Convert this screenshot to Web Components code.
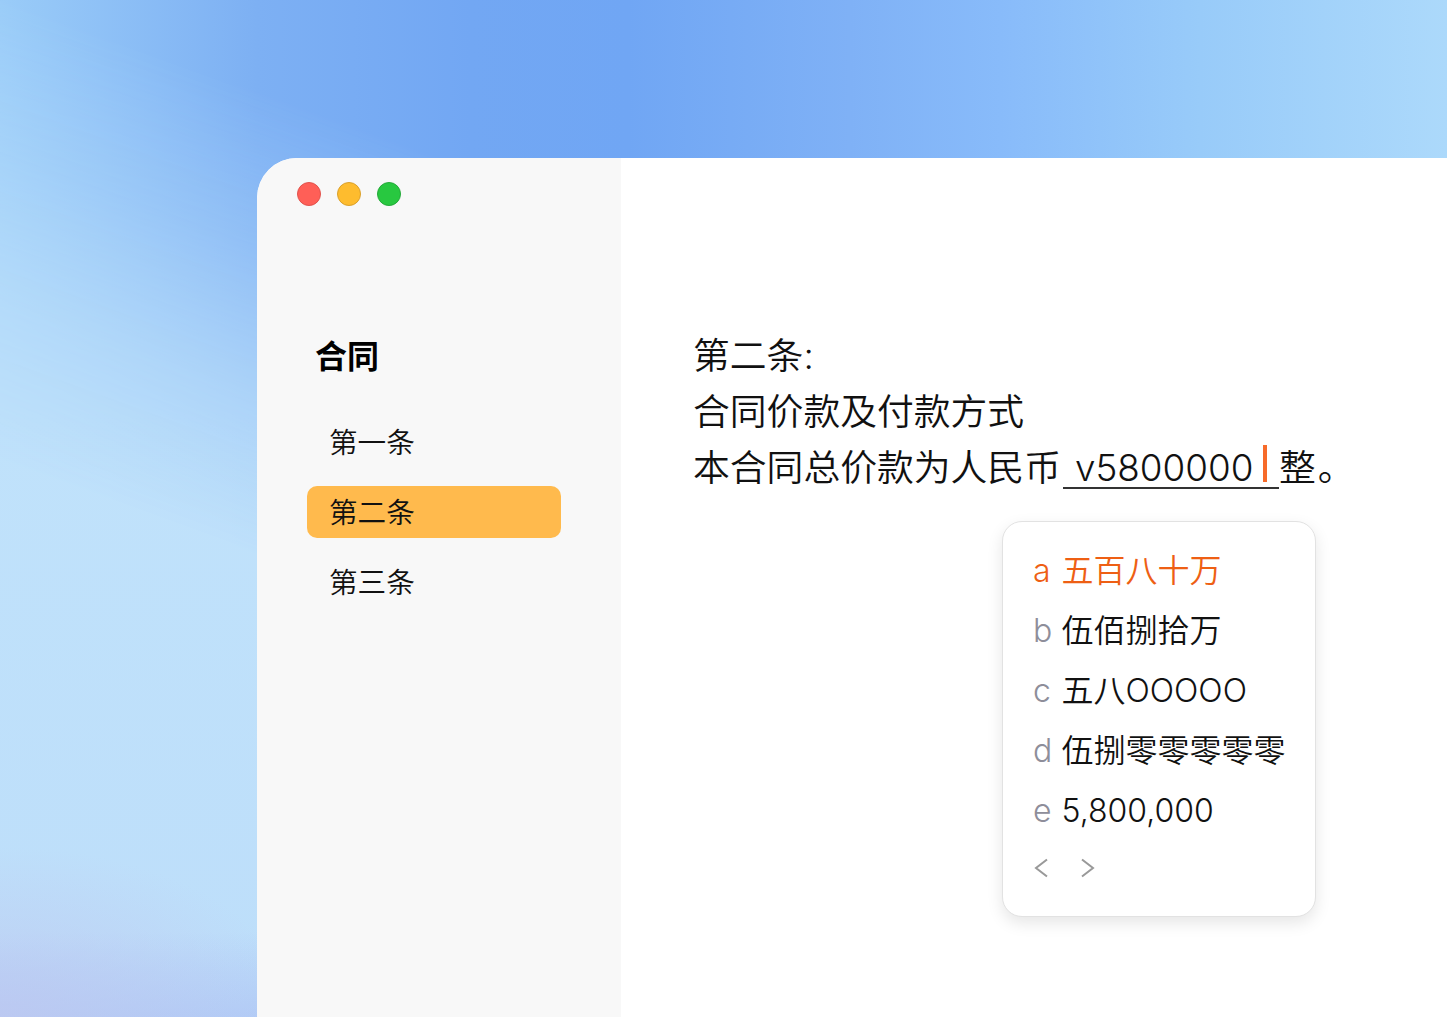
<!DOCTYPE html>
<html lang="zh">
<head>
<meta charset="utf-8">
<title>合同</title>
<style>
  html, body { margin: 0; height: 100%; overflow: hidden; }
  body { font-family: Inter, "Noto Sans CJK SC", sans-serif; font-weight: 350; color: #111; }
</style>
</head>
<body>
<app-backdrop>
  <app-window>
    <side-nav slot="side" heading="合同">
      <nav-item>第一条</nav-item>
      <nav-item active>第二条</nav-item>
      <nav-item>第三条</nav-item>
    </side-nav>
    <contract-doc slot="main"></contract-doc>
  </app-window>
</app-backdrop>

<script>
class AppBackdrop extends HTMLElement {
  constructor() {
    super();
    this.attachShadow({ mode: "open" });
    this.shadowRoot.innerHTML = `
    <style>
      :host {
        display: block;
        position: relative;
        box-sizing: border-box;
        width: 1447px;
        height: 1017px;
        padding: 158px 0 0 257px;
        overflow: hidden;
        background:
          radial-gradient(ellipse 300px 170px at 0 1017px, rgba(190,200,240,.8) 0%, rgba(190,200,240,0) 100%),
          linear-gradient(0deg, rgba(172,196,245,.7) 0, rgba(172,196,245,0) 85px),
          linear-gradient(#c0e2fb 40%, #bddefa);
      }
      .sky {
        position: absolute;
        inset: 0;
        background: linear-gradient(90deg, #9accf8 0, #7db0f3 257px, #72a7f3 470px, #70a6f4 628px, #7fb1f6 850px, #88bbfa 1000px, #98cbf9 1200px, #acd9fb 1447px);
        -webkit-mask-image: linear-gradient(200deg, #000 34%, rgba(0,0,0,.7) 44%, rgba(0,0,0,.3) 54%, transparent 64%);
        mask-image: linear-gradient(200deg, #000 34%, rgba(0,0,0,.7) 44%, rgba(0,0,0,.3) 54%, transparent 64%);
      }
      ::slotted(*) { position: relative; }
    </style>
    <div class="sky"></div>
    <slot></slot>`;
  }
}

class AppWindow extends HTMLElement {
  constructor() {
    super();
    this.attachShadow({ mode: "open" });
    this.shadowRoot.innerHTML = `
    <style>
      :host {
        display: flex;
        height: 859px;
        background: #fff;
        border-radius: 40px 0 0 0;
        overflow: hidden;
      }
      ::slotted([slot="side"]) { flex: 0 0 364px; }
      ::slotted([slot="main"]) { flex: 1; }
    </style>
    <slot name="side"></slot>
    <slot name="main"></slot>`;
  }
}

class SideNav extends HTMLElement {
  constructor() {
    super();
    this.attachShadow({ mode: "open" });
    this.shadowRoot.innerHTML = `
    <style>
      :host {
        display: block;
        box-sizing: border-box;
        background: #f8f8f8;
        padding: 24px 60px 0 50px;
      }
      .lights { display: flex; gap: 16px; margin-left: -10px; }
      .lights i { width: 24px; height: 24px; box-sizing: border-box; border-radius: 50%; border: 1px solid; }
      .lights .r { background: #ff5f57; border-color: #e0534d; }
      .lights .y { background: #febc2e; border-color: #d9a02c; }
      .lights .g { background: #28c840; border-color: #25a93a; }
      h2 {
        margin: 128px 0 36px 8px;
        font-size: 32px;
        line-height: 46px;
        font-weight: 700;
        color: #000;
      }
      .items { display: flex; flex-direction: column; gap: 18px; }
    </style>
    <div class="lights"><i class="r"></i><i class="y"></i><i class="g"></i></div>
    <h2></h2>
    <div class="items"><slot></slot></div>`;
  }
  connectedCallback() {
    this.shadowRoot.querySelector("h2").textContent = this.getAttribute("heading");
  }
}

class NavItem extends HTMLElement {
  constructor() {
    super();
    this.attachShadow({ mode: "open" });
    this.shadowRoot.innerHTML = `
    <style>
      :host {
        display: block;
        height: 52px;
        line-height: 54px;
        padding-left: 22px;
        font-size: 28.6px;
        color: #111;
        border-radius: 10px;
      }
      :host([active]) { background: #ffba4d; }
    </style>
    <slot></slot>`;
  }
}

class ContractDoc extends HTMLElement {
  constructor() {
    super();
    this.attachShadow({ mode: "open" });
    this.shadowRoot.innerHTML = `
    <style>
      :host {
        display: block;
        position: relative;
        box-sizing: border-box;
        padding: 170px 0 0 72px;
        font-size: 36.8px;
        line-height: 56px;
        color: #111;
      }
      p { margin: 0; white-space: nowrap; }
      .fill {
        display: inline-block;
        position: relative;
        box-sizing: border-box;
        width: 216px;
        margin-left: 2px;
        padding: 0 0 1.4px 12px;
        line-height: 36px;
        border-bottom: 2px solid #333;
      }
      .caret {
        position: absolute;
        left: 200px;
        top: -5px;
        width: 4px;
        height: 37px;
        background: #f76b2a;
      }
      .stop { margin-left: 2px; }
      choice-list { position: absolute; left: 381px; top: 363px; }
    </style>
    <p>第二条:</p>
    <p>合同价款及付款方式</p>
    <p>本合同总价款为人民币<span class="fill">v5800000<span class="caret"></span></span>整<span class="stop">。</span></p>
    <choice-list>
      <choice-row key="a" selected>五百八十万</choice-row>
      <choice-row key="b">伍佰捌拾万</choice-row>
      <choice-row key="c">五八OOOOO</choice-row>
      <choice-row key="d">伍捌零零零零零</choice-row>
      <choice-row key="e">5,800,000</choice-row>
    </choice-list>`;
  }
}

class ChoiceList extends HTMLElement {
  constructor() {
    super();
    this.attachShadow({ mode: "open" });
    this.shadowRoot.innerHTML = `
    <style>
      :host {
        display: block;
        box-sizing: border-box;
        width: 314px;
        height: 396px;
        padding: 19px 0 0 30px;
        background: #fff;
        border: 1px solid #e2e2e2;
        border-radius: 20px;
        box-shadow: 0 6px 16px rgba(0,0,0,.1);
      }
      .pager { display: flex; gap: 33px; margin: 17px 0 0 1px; }
      svg { display: block; width: 14px; height: 20px; fill: none; stroke: #999; stroke-width: 2; }
    </style>
    <slot></slot>
    <div class="pager">
      <svg viewBox="0 0 14 20"><path d="M13 1.5 L2 10 L13 18.5"/></svg>
      <svg viewBox="0 0 14 20"><path d="M1 1.5 L12 10 L1 18.5"/></svg>
    </div>`;
  }
}

class ChoiceRow extends HTMLElement {
  constructor() {
    super();
    this.attachShadow({ mode: "open" });
    this.shadowRoot.innerHTML = `
    <style>
      :host {
        display: flex;
        height: 60px;
        line-height: 60px;
        font-size: 32px;
        color: #111;
        white-space: nowrap;
      }
      b { flex: 0 0 28.5px; font-weight: 350; color: #8e8e9a; }
      :host([selected]) { color: #ee5f14; }
      :host([selected]) b { color: #ee5f14; }
    </style>
    <b></b><span><slot></slot></span>`;
  }
  connectedCallback() {
    this.shadowRoot.querySelector("b").textContent = this.getAttribute("key");
  }
}

customElements.define("app-backdrop", AppBackdrop);
customElements.define("app-window", AppWindow);
customElements.define("side-nav", SideNav);
customElements.define("nav-item", NavItem);
customElements.define("contract-doc", ContractDoc);
customElements.define("choice-list", ChoiceList);
customElements.define("choice-row", ChoiceRow);
</script>
</body>
</html>
